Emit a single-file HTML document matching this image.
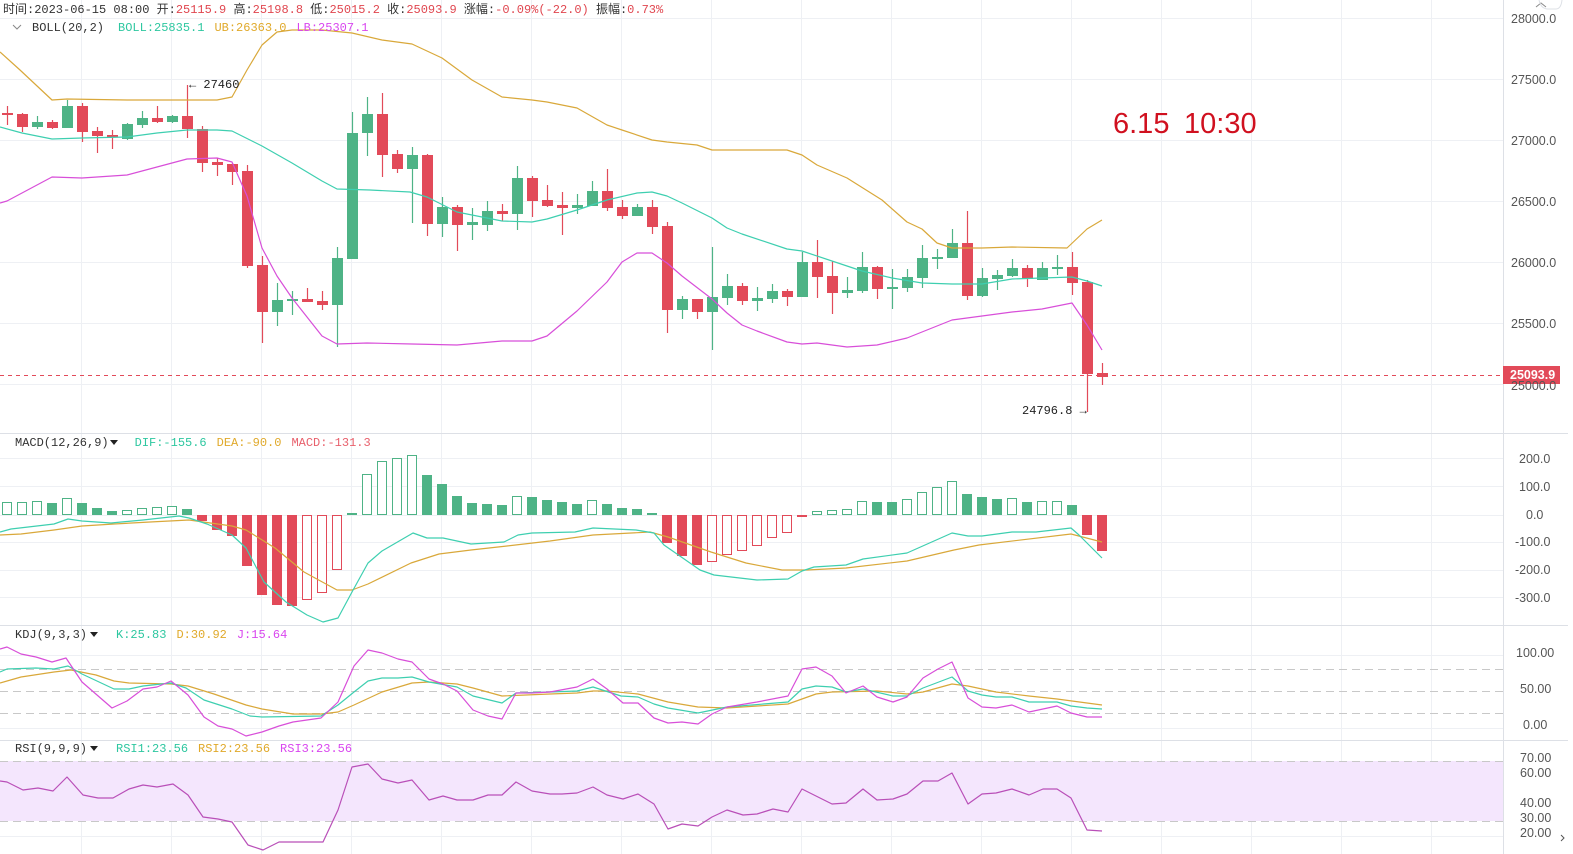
<!DOCTYPE html>
<html><head><meta charset="utf-8">
<style>
html,body{margin:0;padding:0;background:#fff;}
body{width:1573px;height:854px;overflow:hidden;position:relative;font-family:"Liberation Mono","Noto Sans CJK SC",monospace;}
svg{position:absolute;left:0;top:0;}
text{font-family:"Liberation Mono","Noto Sans CJK SC",monospace;font-size:12px;}
.ax{fill:#555;font-family:"Liberation Sans",sans-serif;font-size:12.5px;}
</style></head>
<body>
<svg id="s" width="1573" height="854" viewBox="0 0 1573 854" xmlns="http://www.w3.org/2000/svg">
<g id="grid" stroke="#eef0f4" stroke-width="1"></g>
<rect x="0" y="761" width="1503" height="60" fill="#f4e6fd"/>
<g stroke="#dde0e6" stroke-width="1">
<line x1="0" y1="433.5" x2="1568" y2="433.5"/>
<line x1="0" y1="625.5" x2="1568" y2="625.5"/>
<line x1="0" y1="740.5" x2="1568" y2="740.5"/>
<line x1="1503.5" y1="0" x2="1503.5" y2="854"/>
</g>
<g stroke="#c8c8c8" stroke-dasharray="8,5" stroke-width="1">
<line x1="0" y1="669.5" x2="1503" y2="669.5"/>
<line x1="0" y1="691.5" x2="1503" y2="691.5"/>
<line x1="0" y1="713.5" x2="1503" y2="713.5"/>
<line x1="0" y1="761.5" x2="1503" y2="761.5"/>
<line x1="0" y1="821.5" x2="1503" y2="821.5"/>
</g>
<g id="plot"></g>
<line x1="0" y1="375.5" x2="1503" y2="375.5" stroke="#e24a59" stroke-dasharray="4,4" stroke-width="1"/>
<rect x="1503" y="366" width="57" height="18" fill="#e24a59"/>
<text x="1510" y="379" fill="#fff" style="font-family:'Liberation Sans',sans-serif;font-size:12.5px;font-weight:bold">25093.9</text>

<g class="ax">
<text class="ax" x="1511" y="23">28000.0</text>
<text class="ax" x="1511" y="84">27500.0</text>
<text class="ax" x="1511" y="145">27000.0</text>
<text class="ax" x="1511" y="206">26500.0</text>
<text class="ax" x="1511" y="267">26000.0</text>
<text class="ax" x="1511" y="328">25500.0</text>
<text class="ax" x="1511" y="390">25000.0</text>
<text class="ax" x="1519" y="463">200.0</text>
<text class="ax" x="1519" y="491">100.0</text>
<text class="ax" x="1526" y="519">0.0</text>
<text class="ax" x="1515" y="546">-100.0</text>
<text class="ax" x="1515" y="574">-200.0</text>
<text class="ax" x="1515" y="602">-300.0</text>
<text class="ax" x="1516" y="657">100.00</text>
<text class="ax" x="1520" y="693">50.00</text>
<text class="ax" x="1523" y="729">0.00</text>
<text class="ax" x="1520" y="762">70.00</text>
<text class="ax" x="1520" y="777">60.00</text>
<text class="ax" x="1520" y="807">40.00</text>
<text class="ax" x="1520" y="822">30.00</text>
<text class="ax" x="1520" y="837">20.00</text>
</g>
<path d="M1536 7 L1541 3 L1546 7" stroke="#888" fill="none"/>
<path d="M1539 0 Q1541 9 1548 9 L1556 9 Q1561 9 1562 0" stroke="#dde0e6" fill="none"/>
<path d="M1561 835 L1564 838 L1561 841" stroke="#555" fill="none"/>

<text x="3" y="13"><tspan fill="#333">时间:2023-06-15 08:00  开:</tspan><tspan fill="#e0464f">25115.9</tspan><tspan fill="#333">  高:</tspan><tspan fill="#e0464f">25198.8</tspan><tspan fill="#333">  低:</tspan><tspan fill="#e0464f">25015.2</tspan><tspan fill="#333">  收:</tspan><tspan fill="#e0464f">25093.9</tspan><tspan fill="#333">  涨幅:</tspan><tspan fill="#e0464f">-0.09%(-22.0)</tspan><tspan fill="#333">  振幅:</tspan><tspan fill="#e0464f">0.73%</tspan></text>
<path d="M13 25 L17 29 L21 25" stroke="#888" fill="none"/>
<text x="32" y="31"><tspan fill="#333">BOLL(20,2)</tspan><tspan fill="#2ec7a0" dx="14">BOLL:25835.1</tspan><tspan fill="#e0a92a" dx="10">UB:26363.0</tspan><tspan fill="#d946ef" dx="10">LB:25307.1</tspan></text>
<text x="15" y="446"><tspan fill="#333">MACD(12,26,9)</tspan><tspan fill="#2ec7a0" dx="26">DIF:-155.6</tspan><tspan fill="#e0a92a" dx="10">DEA:-90.0</tspan><tspan fill="#e8606c" dx="10">MACD:-131.3</tspan></text>
<path d="M110 440 L118 440 L114 445 Z" fill="#222"/>
<text x="15" y="638"><tspan fill="#333">KDJ(9,3,3)</tspan><tspan fill="#2ec7a0" dx="29">K:25.83</tspan><tspan fill="#e0a92a" dx="10">D:30.92</tspan><tspan fill="#d946ef" dx="10">J:15.64</tspan></text>
<path d="M90 632 L98 632 L94 637 Z" fill="#222"/>
<text x="15" y="752"><tspan fill="#333">RSI(9,9,9)</tspan><tspan fill="#2ec7a0" dx="29">RSI1:23.56</tspan><tspan fill="#e0a92a" dx="10">RSI2:23.56</tspan><tspan fill="#d946ef" dx="10">RSI3:23.56</tspan></text>
<path d="M90 746 L98 746 L94 751 Z" fill="#222"/>
<text x="189" y="88" fill="#222">← 27460</text>
<text x="1022" y="414" fill="#222">24796.8 →</text>
<text x="1113" y="133" fill="#d0101f" style="font-family:'Liberation Sans',sans-serif;font-size:29px"><tspan>6.15</tspan><tspan x="1184">10:30</tspan></text>
</svg>
<script>
(function(){
var NS="http://www.w3.org/2000/svg";
var g=document.getElementById('grid'),p=document.getElementById('plot');
function el(par,t,a){var e=document.createElementNS(NS,t);for(var k in a)e.setAttribute(k,a[k]);par.appendChild(e);return e;}
for(var x=81;x<1503;x+=90)el(g,'line',{x1:x+.5,y1:0,x2:x+.5,y2:854});
[18,79,140,201,262,323,384,458,486,515,542,570,597,655,728,777,806,836].forEach(function(y){el(g,'line',{x1:0,y1:y+.5,x2:1503,y2:y+.5});});
var R="#e24a59",G="#4eb386";
var c=[[113,115,106,125,R],[114,127,113,132,R],[122,127,116,129,G],[122,128,120,129,R],[106,128,100,128,G],[106,132,103,142,R],[131,136,127,153,R],[135,137,130,149,R],[124,139,123,140,G],[118,125,111,128,G],[118,122,106,123,R],[116,122,115,123,G],[116,129,85,138,R],[129,163,126,172,R],[162,165,158,176,R],[164,172,163,185,R],[171,266,165,268,R],[265,312,256,343,R],[300,312,283,326,G],[299,301,291,315,G],[299,302,288,302,R],[301,305,291,310,R],[258,305,247,347,G],[133,259,112,259,G],[114,133,97,156,G],[114,155,93,177,R],[154,169,150,173,R],[155,169,147,223,G],[155,224,154,236,R],[207,224,197,237,G],[207,225,205,251,R],[222,225,208,240,G],[211,225,201,231,G],[211,214,204,221,R],[178,214,166,230,G],[178,201,176,217,R],[200,206,185,207,R],[205,208,192,235,R],[205,208,194,214,G],[191,206,181,206,G],[191,208,169,211,R],[207,216,200,219,R],[207,216,204,216,G],[207,227,200,234,R],[226,310,222,333,R],[299,310,296,319,G],[299,312,299,319,R],[297,312,247,350,G],[286,298,274,305,G],[286,301,283,305,R],[298,301,287,311,G],[291,299,284,303,G],[291,297,289,306,R],[262,297,252,297,G],[262,277,240,298,R],[276,293,261,314,R],[290,293,277,298,G],[267,291,252,293,G],[267,289,266,299,R],[287,289,269,309,G],[277,288,269,292,G],[258,278,245,288,G],[257,259,249,269,G],[243,258,229,258,G],[243,296,211,300,R],[278,296,268,297,G],[275,279,270,290,G],[268,276,259,277,G],[268,279,265,287,R],[268,280,262,280,G],[267,269,255,275,G],[267,283,252,295,R],[282,374,280,412,R],[373,377,363,385,R]];
c.forEach(function(d,i){var x=7+15*i;
el(p,'line',{x1:x+.5,y1:d[2],x2:x+.5,y2:d[3],stroke:d[4],'stroke-width':1.2});
el(p,'rect',{x:x-5,y:d[0],width:11,height:Math.max(2,d[1]-d[0]),fill:d[4]});});
function pl(pts,col){el(p,'polyline',{points:pts,fill:'none',stroke:col,'stroke-width':1.2,'stroke-linejoin':'round'});}
var TE="#3ecfb0",GO="#d9a83a",MA="#d84fd9";
pl("0,52 20,70 52,100 67,99 127,100 172,100 217,100 232,97 247,70 262,45 277,32 292,30 322,30 352,33 382,40 412,44 442,58 472,80 502,97 532,100 547,102 577,108 607,125 622,130 652,140 667,142 697,145 712,150 757,150 787,150 802,155 817,165 847,178 882,200 907,222 922,229 937,243 952,248 982,248 1012,247 1067,248 1087,229 1102,220",GO);
pl("0,127 22,133 52,139 82,138 127,137 157,133 187,130 217,130 232,131 262,146 292,163 322,181 337,189 370,190 410,192 427,197 457,212 502,221 532,222 547,219 577,210 607,200 637,193 652,192 667,196 682,203 712,218 727,228 742,234 787,249 802,251 847,266 862,271 892,278 922,283 952,284 982,284 1012,279 1042,278 1072,277 1087,281 1102,286",TE);
pl("0,203 7,201 22,193 52,177 82,178 127,175 157,167 172,163 187,159 217,158 232,162 247,196 262,248 277,276 292,298 322,336 337,344 367,343 412,344 457,345 502,341 532,341 547,336 577,311 607,282 622,262 637,253 652,253 667,263 682,276 712,299 727,313 742,325 757,331 787,342 802,344 817,343 847,347 877,345 907,338 937,326 952,320 982,316 1012,312 1042,309 1072,303 1087,325 1102,350",MA);
var m=[[502,'g'],[502,'g'],[501,'g'],[503,'G'],[498,'g'],[503,'G'],[508,'G'],[511,'G'],[510,'g'],[508,'g'],[507,'g'],[506,'g'],[509,'G'],[521,'R'],[530,'R'],[536,'R'],[566,'R'],[595,'R'],[605,'R'],[606,'R'],[600,'r'],[593,'r'],[570,'r'],[513,'G'],[474,'g'],[461,'g'],[458,'g'],[455,'g'],[475,'G'],[484,'G'],[496,'G'],[503,'G'],[504,'G'],[505,'G'],[496,'g'],[497,'G'],[500,'G'],[502,'G'],[504,'G'],[500,'g'],[504,'G'],[508,'G'],[509,'G'],[513,'G'],[543,'R'],[556,'R'],[565,'R'],[562,'r'],[555,'r'],[551,'r'],[546,'r'],[538,'r'],[533,'r'],[517,'R'],[511,'g'],[510,'g'],[509,'g'],[501,'g'],[502,'G'],[502,'G'],[499,'g'],[492,'g'],[487,'g'],[481,'g'],[494,'G'],[497,'G'],[499,'G'],[498,'g'],[502,'G'],[501,'g'],[501,'g'],[505,'G'],[535,'R'],[551,'R']];
var Z=515;
m.forEach(function(d,i){var x=7+15*i,y0=Math.min(d[0],Z),h=Math.max(1.5,Math.abs(d[0]-Z));
var col=(d[1]=='g'||d[1]=='G')?G:R;
if(d[1]=='G'||d[1]=='R')el(p,'rect',{x:x-5,y:y0,width:10,height:h,fill:col});
else el(p,'rect',{x:x-4.5,y:y0+.5,width:9,height:h-1,fill:'#fff',stroke:col,'stroke-width':1});});
pl("0,535 21,534 54,530 82,526 114,524 150,522 189,520 232,526 246,530 275,548 304,572 337,590 352,590 368,584 411,563 439,554 471,550 507,546 550,541 593,535 650,532 668,537 711,552 746,563 782,570 807,570 846,568 907,561 954,550 979,545 1071,534 1102,542",GO);
pl("0,532 11,529 54,524 68,519 82,521 111,523 143,520 179,516 189,518 207,524 232,535 246,548 264,582 286,602 307,615 323,622 338,618 352,592 368,563 382,551 413,533 427,538 443,538 471,544 504,542 518,535 532,533 575,532 593,528 636,530 654,533 664,545 700,570 714,575 757,580 788,579 802,571 814,567 846,565 863,559 907,553 952,533 968,536 982,536 1012,532 1036,532 1071,528 1079,535 1102,558",TE);
pl("0,683 21,677 54,672 71,670 96,675 114,681 129,683 171,684 188,686 214,694 246,705 262,709 293,714 321,714 338,712 354,705 382,692 412,683 429,682 457,684 473,688 502,696 550,694 577,693 593,691 607,691 638,694 668,702 698,707 727,708 788,704 816,694 832,692 877,691 907,694 923,692 952,684 968,686 996,692 1029,696 1057,699 1102,705",GO);
pl("0,672 7,669 36,668 54,669 68,666 82,674 114,689 129,689 143,686 171,683 186,688 204,700 232,709 250,716 262,717 321,716 338,705 354,692 368,681 382,678 398,678 412,677 429,682 457,687 473,696 502,703 516,693 550,692 577,691 593,687 621,696 638,697 654,704 668,708 698,713 727,707 788,702 802,689 816,686 832,687 846,692 863,689 893,696 907,696 923,688 952,677 968,691 982,695 996,697 1012,697 1029,702 1057,702 1071,706 1087,708 1102,709",TE);
pl("0,649 7,647 21,654 36,657 52,662 66,658 82,682 112,708 127,701 143,689 157,687 171,681 188,695 204,717 218,726 232,729 246,736 262,732 279,726 293,722 307,720 321,718 338,702 354,666 368,650 382,653 398,659 412,662 429,679 443,684 457,691 473,710 488,716 502,719 516,693 532,693 550,692 577,687 593,679 607,689 623,703 638,703 654,718 668,723 682,722 698,724 712,714 727,707 757,702 788,696 802,669 816,667 832,676 846,693 863,686 877,697 893,702 907,697 923,678 938,669 952,662 968,698 982,707 996,708 1012,705 1029,712 1057,706 1071,713 1087,717 1102,717",MA);
pl("0,781 7,782 23,790 38,788 53,791 67,777 83,795 98,798 113,798 129,789 143,785 157,787 173,784 188,795 203,817 218,819 232,822 248,845 263,850 279,842 293,842 323,842 338,810 352,767 368,764 382,779 398,783 412,780 429,800 443,796 457,800 473,800 488,795 502,795 516,782 532,791 550,794 562,794 577,793 593,787 607,795 623,799 638,794 654,804 668,829 682,824 698,826 712,817 727,810 743,815 757,814 773,809 788,812 802,789 818,797 832,804 846,803 863,789 877,800 893,799 907,794 923,781 938,781 952,773 968,804 982,794 996,793 1012,789 1029,795 1043,789 1057,789 1071,798 1087,830 1102,831","#b94fb8");
})();
</script>
</body></html>
